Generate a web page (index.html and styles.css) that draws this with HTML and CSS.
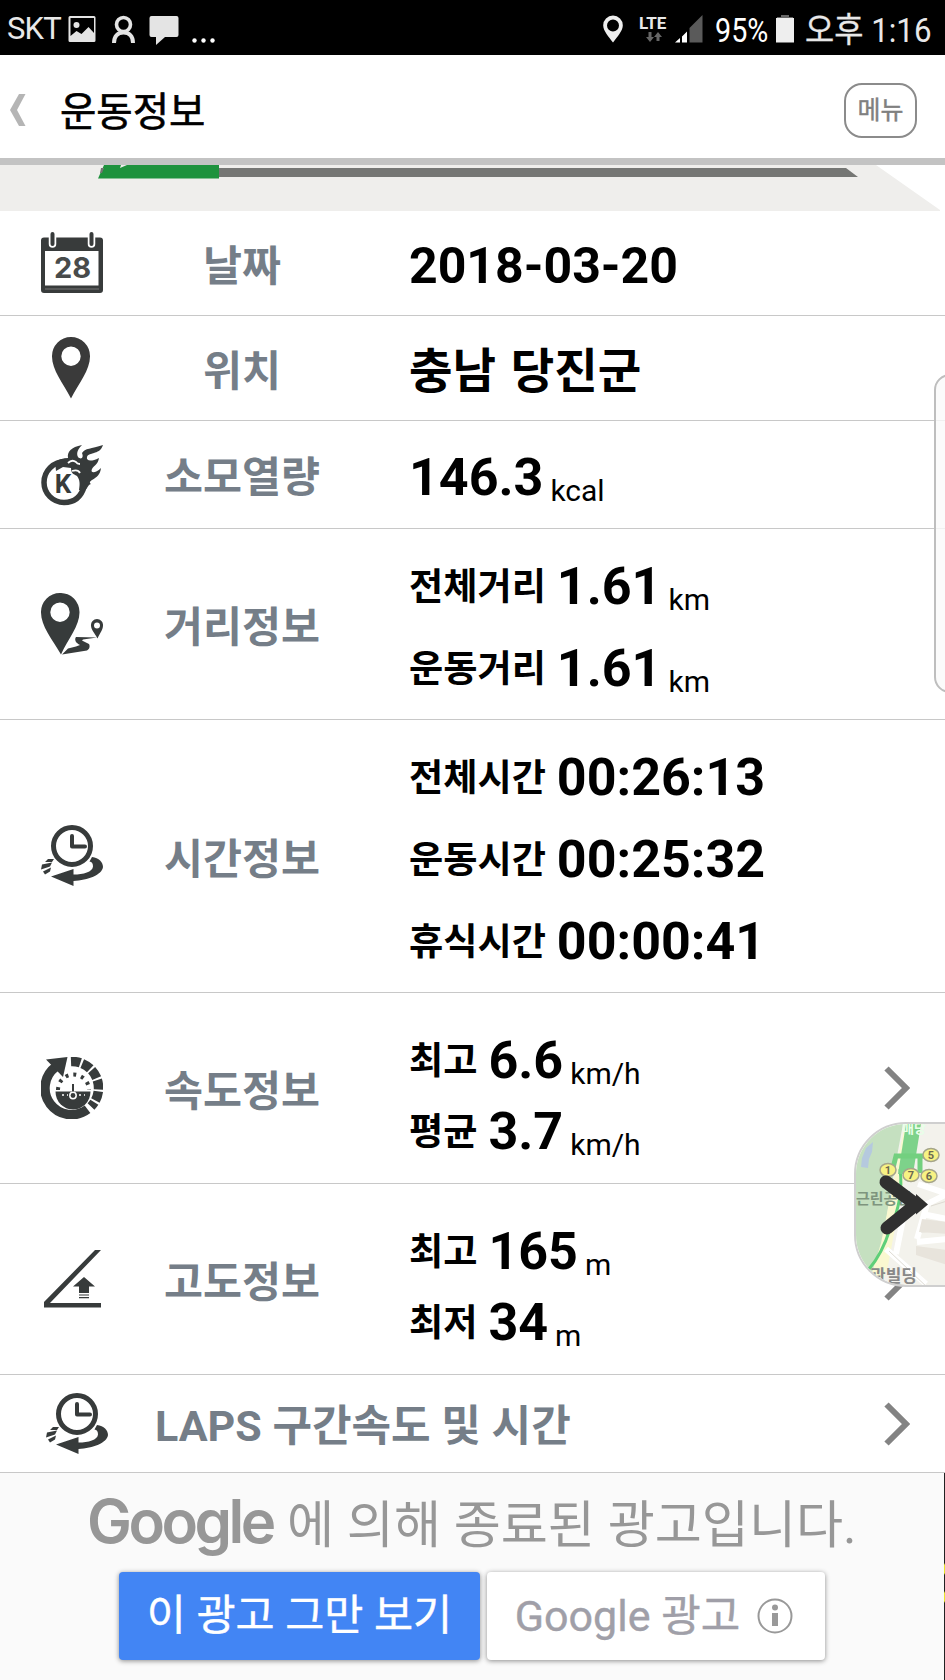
FILE: index.html
```html
<!DOCTYPE html>
<html lang="ko">
<head>
    <meta charset="UTF-8">
    <meta name="viewport" content="width=device-width, initial-scale=1.0">
    <title>운동정보</title>
    <link rel="stylesheet" href="styles.css">
</head>
<body>
    <!-- Status bar -->
    <div class="status-bar">
        <span class="carrier">SKT</span>
        <svg class="status-left" width="150" height="34" viewBox="66 10 150 34">
            <path fill="#e4e4e4" fill-rule="evenodd" d="M70 15h24q1.500 0 1.500 1.500v23q0 1.500-1.500 1.500H70q-1.500 0-1.500-1.500v-23Q68.500 15 70 15zM70.500 17v18l6-5 5 3 7-7 5.500 6V17z"/>
            <circle cx="76.500" cy="24" r="3" fill="#e4e4e4"/>
            <circle cx="123.500" cy="23.500" r="7" fill="none" stroke="#e4e4e4" stroke-width="3.600"/>
            <path d="M114 42c0-7 4-10.500 9.500-10.500S133 35 133 42" fill="none" stroke="#e4e4e4" stroke-width="4"/>
            <path fill="#e4e4e4" d="M151.500 15h25q2 0 2 2v17q0 2-2 2H165l-9 8v-8h-4.500q-2 0-2-2V17q0-2 2-2z"/>
            <g fill="#fff"><circle cx="194.500" cy="39.500" r="2.200"/><circle cx="203.500" cy="39.500" r="2.200"/><circle cx="212.500" cy="39.500" r="2.200"/></g>
        </svg>
        <div class="status-right">
            <svg width="20" height="28" viewBox="0 0 20 28"><path fill="#eee" fill-rule="evenodd" d="M10 .5a9.800 9.800 0 0 1 9.800 10C19.800 16 14 22 10 27.500 6 22 .2 16 .2 10.500A9.800 9.800 0 0 1 10 .5zM10 4.500a6 6 0 1 0 0 12 6 6 0 0 0 0-12z"/></svg>
            <div class="lte">
                <span>LTE</span>
                <svg width="16" height="10" viewBox="0 0 16 10"><path fill="#666" d="M2.500 0h3v5H8L4 10 0 5h2.500zM10.500 9h3V5H16l-4-5-4 5h2.500z"/></svg>
            </div>
            <svg class="signal" width="28" height="28" viewBox="0 0 28 28"><path fill="#fff" d="M0 27.500l5-4.500v4.500zM7 21.500l5-5v11H7z"/><path fill="#5a5a5a" d="M14.500 13L27.500 0v27.500h-13z"/></svg>
            <span class="percent">95%</span>
            <svg class="battery" width="18" height="28" viewBox="0 0 18 28"><path fill="#666" d="M5 0h8v2h4v2H1V2h4z"/><path fill="#eee" d="M0 3h18v24.500H0z"/></svg>
            <span class="clock"><span class="ampm">오후</span> 1:16</span>
        </div>
    </div>

    <!-- Title bar -->
    <div class="header">
        <svg class="back" width="16" height="34" viewBox="0 0 16 34"><path fill="#b5b5b5" d="M9 1h6.500L7 17l8.500 16H9L0 17z"/></svg>
        <h1>운동정보</h1>
        <button class="menu-button">메뉴</button>
    </div>

    <!-- Progress graphic, scrolled half under the header -->
    <svg class="progress" width="945" height="46" viewBox="0 0 945 46">
        <path fill="#efeeec" d="M0 0h876l64 45v1H0z"/>
        <path fill="#757674" d="M219 3h627l12 9H219z"/>
        <path fill="#1e923d" d="M104 0h115v13.500H98z"/>
        <path fill="#efeeec" d="M121 0h6l-7 3z"/>
        <path fill="#757674" d="M101 3h3l-2 5h-2z"/>
    </svg>

    <div class="info">
        <div class="row row-short">
            <svg class="icon" viewBox="0 0 62 62">
                <path fill="#383b3b" fill-rule="evenodd" d="M3 5.500h56q3 0 3 3V58q0 3-3 3H3q-3 0-3-3V8.500q0-3 3-3zM4 19v34.500h53.500V19z"/>
                <path stroke="#fff" stroke-width="7.500" stroke-linecap="round" d="M11.500 0v12M50.500 0v12"/>
                <path stroke="#383b3b" stroke-width="4" stroke-linecap="round" d="M11.500 2v10M50.500 2v10"/>
                <path stroke="#777" d="M4 57h54"/>
                <text x="31.500" y="45.500" text-anchor="middle" class="cal-day">28</text>
            </svg>
            <div class="label">날짜</div>
            <div class="value date">2018-03-20</div>
        </div>
        <div class="row row-short">
            <svg class="icon" viewBox="0 0 62 62"><path fill="#3a3a3a" fill-rule="evenodd" d="M30 0a19 19 0 0 1 19 19.500C49 33 38 46 30 61.500 22 46 11 33 11 19.500A19 19 0 0 1 30 0zM30 9.500a9.700 9.700 0 1 0 0 19.400 9.700 9.700 0 0 0 0-19.400z"/></svg>
            <div class="label">위치</div>
            <div class="value place">충남 당진군</div>
        </div>
        <div class="row row-kcal">
            <svg class="icon" viewBox="0 0 62 62">
                <path fill="none" stroke="#373b3b" stroke-width="5.500" d="M25 17.500C12 17.500 3 27 3 38.500a20 20 0 0 0 20 20c12 0 18-8 20.500-17"/>
                <path fill="#373b3b" d="M14 18c5-3 8-4 13-4-1-6 3-11 14-13-4 4-6 8-4 12 3 3 6 1 4-4 3-5 9-4 21-8-2 6-6 7-9 8-5 2-6 1-7 4-1 4 4 5 12 1-1 7-6 8-7 11-2 4 3 5 9-1-1 7-4 9-9 12-2 1-3 3-1 4-4 1-4 7-8 7l-4-1c1-6 1-10-2-14-4-2-6-3-6-8l-8-1-7 4z"/>
                <path fill="none" stroke="#fff" stroke-width="1.800" d="M27 19q4-4 8-1 1 2 4 2M31 27q6-2 8 2"/>
                <text x="22" y="49" text-anchor="middle" class="kcal-k">K</text>
            </svg>
            <div class="label">소모열량</div>
            <div class="value"><p>146.3<span class="unit">kcal</span></p></div>
        </div>
        <div class="row row-distance">
            <svg class="icon" viewBox="0 0 62 62">
                <path fill="#373b3b" fill-rule="evenodd" d="M19 0a19 19 0 0 1 19.500 19.500C38.500 33 27 46 20 61.500 11 46 0 33 0 19.500A19 19 0 0 1 19 0zM19 9.500a9.700 9.700 0 1 0 0 19.400 9.700 9.700 0 0 0 0-19.400z"/>
                <path fill="#373b3b" fill-rule="evenodd" d="M56 26a6 6 0 0 1 6 6.500c0 4-3 7.500-5.500 13-3-5.500-6.500-9-6.500-13A6 6 0 0 1 56 26zM56 29.500a3 3 0 1 0 0 6 3 3 0 0 0 0-6z"/>
                <path fill="#373b3b" d="M56 44.500l-21-.5c-2 3 0 6 4 8l-4 1.500-8 2-6 6 25-4c3-1.500 3-5 2-6.500l-7-3.500 1-1z"/>
            </svg>
            <div class="label">거리정보</div>
            <div class="value">
                <p><span class="name">전체거리</span>1.61<span class="unit">km</span></p>
                <p><span class="name">운동거리</span>1.61<span class="unit">km</span></p>
            </div>
        </div>
        <div class="row row-time">
            <svg class="icon" viewBox="0 0 62 62">
                <g id="lap-clock">
                    <circle cx="31" cy="21" r="18.500" fill="none" stroke="#373b3b" stroke-width="5"/>
                    <path fill="none" stroke="#373b3b" stroke-width="4" stroke-linecap="round" stroke-linejoin="round" d="M31 11v10.500h13"/>
                    <path fill="#373b3b" d="M51 32c7 1 11 5 11 10C61 50 47 55 32.500 56V61L10 51.500 32.500 44v5.500c10 0 19-2.500 19.500-8 0-3-1-4.500-3.500-5z"/>
                    <path fill="#373b3b" d="M7 34h6l-2 3H4zM1 39.500l10-2-2 4-9 3zM2 46.500l8-4-1 4-5 3z"/>
                </g>
            </svg>
            <div class="label">시간정보</div>
            <div class="value">
                <p><span class="name">전체시간</span>00:26:13</p>
                <p><span class="name">운동시간</span>00:25:32</p>
                <p><span class="name">휴식시간</span>00:00:41</p>
            </div>
        </div>
        <div class="row row-speed">
            <svg class="icon" viewBox="0 0 62 62">
                <path fill="none" stroke="#373b3b" stroke-width="9.500" d="M46.500 52.300A26.500 26.500 0 0 1 14.500 10"/>
                <path fill="#373b3b" d="M5 2.500L26.500 0 22 20z"/>
                <path fill="none" stroke="#373b3b" stroke-width="9.500" stroke-dasharray="9.500 2" d="M30 4.500A26.500 26.500 0 0 1 50 49.500"/>
                <path fill="none" stroke="#373b3b" stroke-width="4" stroke-dasharray="3 5" d="M17 33a15.500 15.500 0 1 1 31 0"/>
                <path fill="#373b3b" d="M14.500 34.500h35a17.500 18 0 0 1-35 0z"/>
                <path stroke="#373b3b" stroke-width="2" d="M32 27v9"/>
                <circle cx="32" cy="38.500" r="3.200" fill="#373b3b" stroke="#fff" stroke-width="1.500"/>
                <path stroke="#fff" stroke-width="1.500" stroke-dasharray="2 3" d="M21 38h6M38 38h6"/>
            </svg>
            <div class="label">속도정보</div>
            <div class="value">
                <p><span class="name">최고</span>6.6<span class="unit">km/h</span></p>
                <p><span class="name">평균</span>3.7<span class="unit">km/h</span></p>
            </div>
            <svg class="arrow" viewBox="0 0 26 44"><path d="M2.500 2.500L22 22 2.500 41.500"/></svg>
        </div>
        <div class="row row-height">
            <svg class="icon" viewBox="0 0 62 62">
                <path fill="#373b3b" d="M54 2h6L9 55h51v4.500H3V54z"/>
                <path fill="#373b3b" d="M43 29l11 9.500h-6V45H38v-6.500h-6zM38 46.500h10v1H38zM38 49h10v1.200H38z"/>
            </svg>
            <div class="label">고도정보</div>
            <div class="value">
                <p><span class="name">최고</span>165<span class="unit">m</span></p>
                <p><span class="name">최저</span>34<span class="unit">m</span></p>
            </div>
            <svg class="arrow" viewBox="0 0 26 44"><path d="M2.500 2.500L22 22 2.500 41.500"/></svg>
        </div>
        <div class="row row-laps">
            <svg class="icon" viewBox="0 0 62 62"><use href="#lap-clock"/></svg>
            <div class="laps-title">LAPS 구간속도 및 시간</div>
            <svg class="arrow" viewBox="0 0 26 44"><path d="M2.500 2.500L22 22 2.500 41.500"/></svg>
        </div>
    </div>

    <!-- Ad banner -->
    <div class="ad">
        <div class="ad-text"><span class="google">Google</span><span>에 의해 종료된 광고입니다.</span></div>
        <div class="ad-buttons">
            <button class="ad-stop"><span>이 광고 그만 보기</span></button>
            <button class="ad-info">
                <span>Google 광고</span>
                <svg width="36" height="36" viewBox="0 0 36 36"><circle cx="18" cy="18" r="16.500" fill="none" stroke="#999" stroke-width="2"/><circle cx="18" cy="9.500" r="3" fill="#999"/><path fill="#999" d="M15 15h6v13h-6z"/></svg>
            </button>
        </div>
    </div>

    <!-- Overlays: edge handle and floating map -->
    <div class="edge-handle"></div>
    <div class="map-bubble">
        <svg width="91" height="165" viewBox="0 0 91 165">
            <path fill="#f3f2ec" d="M0 0h91v165H0z"/>
            <path fill="#c5e0c0" d="M0 0h47L34 70 27 120 10 165H0z"/>
            <path fill="#b5c9de" d="M10 24l7-6-1 10-3 7-1 9-7-1 1-9z"/>
            <path fill="#faf8d0" d="M49 0h9L43 82l-11 60-9 23H11l14-46z"/>
            <path fill="none" stroke="#fff" stroke-width="6" d="M30 125l40 35M50 80l-10 50M91 70l-20 10-10 35M91 95l-25-5M91 115l-30 3M62 60l30 10"/>
            <path fill="none" stroke="#dddad2" d="M33 127l40 38M75 82l16-5M65 108l26-2M62 125l29 8"/>
            <path fill="#e8e4dc" d="M66 95l25 3v12l-28-2zM60 122l31 4v15l-31-10z"/>
            <path fill="none" stroke="#5fcf79" stroke-width="3" d="M44 45q4 30-10 60-8 25-21 40"/>
            <path fill="#7dd28a" d="M50 0h15l-8 50H42z"/>
            <path fill="none" stroke="#73d07f" stroke-width="5" d="M36 48l4-16h40M64 33v16"/>
            <g class="map-pins"><ellipse cx="75" cy="31" rx="8" ry="6.500"/><ellipse cx="32" cy="46" rx="8" ry="6.500"/><ellipse cx="55" cy="51" rx="8" ry="6.500"/><ellipse cx="73" cy="52" rx="8" ry="6.500"/></g>
            <g class="map-numbers"><text x="75" y="35">5</text><text x="32" y="50">1</text><text x="55" y="55">7</text><text x="73" y="56">6</text></g>
            <text x="58" y="9" class="map-station">매당</text>
            <text x="0" y="80" class="map-name">근린공원</text>
            <text x="14" y="158" class="map-name map-building">관빌딩</text>
            <path fill="none" stroke="#303030" stroke-width="13" stroke-linecap="round" d="M30 58l30 22.500L31 104"/>
            <path fill="#303030" d="M60 70l12 10.500-12 10z"/>
        </svg>
    </div>
    <div class="screen-edge"></div>
</body>
</html>
```
FILE: styles.css
```css
* {
    box-sizing: border-box;
}
body {
    margin: 0;
    width: 945px;
    height: 1680px;
    overflow: hidden;
    position: relative;
    background: #fff;
    color: #000;
    font-family: Roboto, "Noto Sans CJK KR", sans-serif;
}
h1, p {
    margin: 0;
}
svg {
    display: block;
    flex-shrink: 0;
}
button {
    font-family: inherit;
    padding: 0;
    border: none;
}

/* status bar */
.status-bar {
    display: flex;
    align-items: center;
    height: 55px;
    padding: 0 15px 0 7px;
    background: #000;
    color: #e8e8e8;
}
.carrier {
    width: 59px;
    font-size: 31px;
    letter-spacing: -0.8px;
    line-height: 55px;
    padding-top: 2px;
}
.status-right {
    display: flex;
    align-items: center;
    margin-left: auto;
    padding-top: 2px;
}
.lte {
    width: 30px;
    margin: 0 6px 0 16px;
    font-size: 17px;
    font-weight: 700;
    line-height: 17px;
}
.lte svg {
    margin-left: 7px;
}
.percent {
    margin: 3px 7px 0 12px;
    font-size: 33px;
    color: #fff;
    transform: scaleX(0.87);
    width: 54px;
    transform-origin: left;
}
.clock {
    display: block;
    width: 125px;
    margin: 3px 0 0 11px;
    font-size: 34px;
    line-height: 36px;
    white-space: nowrap;
    transform: scaleX(0.92);
    transform-origin: left;
}
.ampm {
    font-size: 34.500px;
    line-height: 0;
    -webkit-text-stroke: 0.300px;
}

/* title bar */
.header {
    display: flex;
    align-items: center;
    height: 110px;
    padding: 0 28px 0 10px;
    border-bottom: 7px solid #c3c3c3;
}
.back {
    margin-top: 7px;
}
h1 {
    margin: 13px 0 0 34px;
    font-size: 39.500px;
    font-weight: 400;
    line-height: 50px;
    -webkit-text-stroke: 0.600px;
}
.menu-button {
    width: 73px;
    height: 55px;
    margin: 7px 0 0 auto;
    border: 2px solid #8b8b8b;
    border-radius: 18px;
    background: #fff;
    color: #808080;
    font-size: 25px;
    line-height: 52px;
    -webkit-text-stroke: 0.400px;
}

/* info table */
.row {
    display: flex;
    align-items: center;
    padding: 0 35px 0 41px;
    border-bottom: 1px solid #c8c8c8;
}
.row-short {
    height: 105px;
}
.row-kcal {
    height: 108px;
}
.row-distance,
.row-speed,
.row-height {
    height: 191px;
}
.row-time {
    height: 273px;
}
.row-laps {
    height: 98px;
    padding-left: 46px;
}
.icon {
    width: 62px;
    height: 62px;
}
.cal-day {
    font-family: Inter, sans-serif;
    font-size: 29px;
    font-weight: 700;
    fill: #484b4b;
}
.kcal-k {
    font-family: Roboto, sans-serif;
    font-size: 26px;
    font-weight: 700;
    fill: #373b3b;
}
.label {
    width: 200px;
    margin-left: 39px;
    padding-top: 7px;
    text-align: center;
    font-size: 42.400px;
    font-weight: 700;
    line-height: 50px;
    color: #757e88;
}
.value {
    margin-left: 67px;
    padding-top: 8px;
    font-size: 52px;
    font-weight: 700;
    line-height: 82.300px;
    white-space: nowrap;
}
.date {
    padding-top: 6px;
    font-size: 50px;
}
.place {
    padding-top: 8px;
    font-size: 47.300px;
    word-spacing: 3px;
}
.row-speed .value,
.row-height .value {
    padding-top: 16px;
    line-height: 71px;
}
.name {
    margin-right: 11px;
    font-size: 37.200px;
    line-height: 0;
    vertical-align: 4px;
}
.unit {
    margin-left: 7px;
    font-size: 30px;
    font-weight: 400;
    line-height: 0;
    vertical-align: -6px;
}
.arrow {
    width: 26px;
    height: 44px;
    margin-left: auto;
    fill: none;
    stroke: #838383;
    stroke-width: 6;
}
.laps-title {
    margin-left: 47px;
    padding-top: 4px;
    font-size: 43px;
    font-weight: 700;
    line-height: 50px;
    color: #757e88;
}

/* ad banner */
.ad {
    height: 207px;
    background: #fafafa;
}
.ad-text {
    display: flex;
    align-items: baseline;
    height: 99px;
    padding-left: 87px;
    font-size: 51.200px;
    line-height: 96px;
    color: #979797;
    white-space: nowrap;
}
.google {
    width: 200px;
    font-family: Inter, sans-serif;
    font-size: 60px;
    font-weight: 600;
    letter-spacing: -3.500px;
}
.ad-buttons {
    display: flex;
    gap: 7px;
    padding-left: 119px;
}
.ad-buttons button {
    display: flex;
    align-items: center;
    justify-content: center;
    height: 88px;
    border-radius: 4px;
    box-shadow: 0 1px 5px rgba(0, 0, 0, 0.45);
    font-size: 42.500px;
}
.ad-buttons span {
    line-height: 50px;
    padding-bottom: 1px;
    -webkit-text-stroke: 0.400px;
}
.ad-buttons .ad-stop {
    width: 361px;
    background: #4285f4;
    color: #fff;
}
.ad-buttons .ad-info {
    width: 338px;
    gap: 17px;
    padding-right: 4px;
    background: #fff;
    color: #a09fa8;
}
.ad-info span {
    font-size: 43px;
}

/* overlays */
.edge-handle {
    position: absolute;
    top: 374px;
    left: 934px;
    width: 40px;
    height: 319px;
    border: 2px solid #bebebe;
    border-radius: 16px;
    background: rgba(250, 250, 250, 0.8);
}
.map-bubble {
    position: absolute;
    top: 1122px;
    left: 854px;
    width: 100px;
    height: 165px;
    overflow: hidden;
    border: 2px solid #cfcfcf;
    border-radius: 52px 0 0 52px;
}
.map-pins ellipse {
    fill: #f7f283;
    stroke: #a5a58a;
    stroke-width: 1.500;
}
.map-numbers text {
    font-size: 11px;
    font-weight: 700;
    text-anchor: middle;
    fill: #6b6950;
}
.map-station {
    font-size: 13px;
    font-weight: 700;
    text-anchor: middle;
    fill: #e9ffe9;
}
.map-name {
    font-size: 15px;
    font-weight: 700;
    fill: #7e957e;
}
.map-building {
    font-size: 17px;
    fill: #888;
}
.screen-edge {
    position: absolute;
    top: 1473px;
    right: 0;
    width: 1px;
    height: 207px;
    background: linear-gradient(#222 90px, #e8e82a 92px, #e8e82a 100px, #222 102px, #222 118px, #e8e82a 120px, #e8e82a 128px, #222 130px);
}
```
